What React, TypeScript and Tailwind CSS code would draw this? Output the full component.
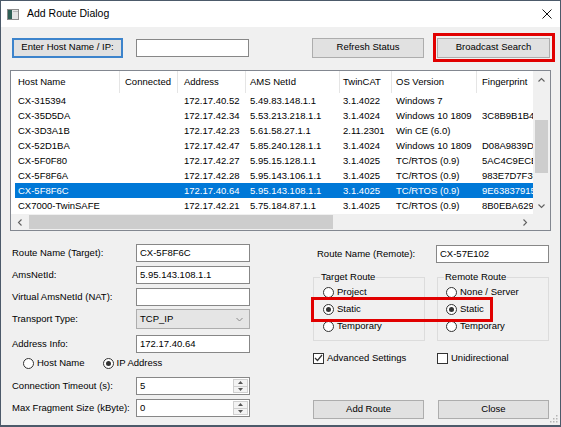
import React from 'react';

type Row = {
  host: string;
  connected: string;
  address: string;
  netId: string;
  tc: string;
  os: string;
  fp: string;
};

const rows: Row[] = [
  { host: 'CX-315394', connected: '', address: '172.17.40.52', netId: '5.49.83.148.1.1', tc: '3.1.4022', os: 'Windows 7', fp: '' },
  { host: 'CX-35D5DA', connected: '', address: '172.17.42.34', netId: '5.53.213.218.1.1', tc: '3.1.4024', os: 'Windows 10 1809', fp: '3C8B9B1B40A2' },
  { host: 'CX-3D3A1B', connected: '', address: '172.17.42.23', netId: '5.61.58.27.1.1', tc: '2.11.2301', os: 'Win CE (6.0)', fp: '' },
  { host: 'CX-52D1BA', connected: '', address: '172.17.42.47', netId: '5.85.240.128.1.1', tc: '3.1.4024', os: 'Windows 10 1809', fp: 'D08A9839D1F4' },
  { host: 'CX-5F0F80', connected: '', address: '172.17.42.27', netId: '5.95.15.128.1.1', tc: '3.1.4025', os: 'TC/RTOS (0.9)', fp: '5AC4C9ECE27B' },
  { host: 'CX-5F8F6A', connected: '', address: '172.17.42.28', netId: '5.95.143.106.1.1', tc: '3.1.4025', os: 'TC/RTOS (0.9)', fp: '983E7D7F3E61' },
  { host: 'CX-5F8F6C', connected: '', address: '172.17.40.64', netId: '5.95.143.108.1.1', tc: '3.1.4025', os: 'TC/RTOS (0.9)', fp: '9E63837915C0' },
  { host: 'CX7000-TwinSAFE', connected: '', address: '172.17.42.21', netId: '5.75.184.87.1.1', tc: '3.1.4025', os: 'TC/RTOS (0.9)', fp: '8B0EBA629D37' },
];

const SELECTED = 6;

function Button({ label, className = '' }: { label: string; className?: string }) {
  return (
    <div
      className={`flex items-center justify-center bg-[#e1e1e1] border border-[#adadad] ${className}`}
    >
      {label}
    </div>
  );
}

function TextBox({ value = '' }: { value?: string }) {
  return (
    <div className="w-[114px] h-[18px] border border-[#878787] bg-white pl-[3px] leading-[16px] whitespace-nowrap overflow-hidden">
      {value}
    </div>
  );
}

function SpinBox({ value }: { value: string }) {
  return (
    <div className="w-[114px] h-[18px] border border-[#878787] bg-white flex">
      <span className="flex-1 pl-[3px] leading-[16px]">{value}</span>
      <div className="w-[15px] m-[1px] flex flex-col border border-[#cfcfcf] bg-[#f3f3f3]">
        <div className="flex-1 flex items-center justify-center border-b border-[#cfcfcf]">
          <svg width="5" height="3" viewBox="0 0 5 3">
            <polygon points="0,3 2.5,0 5,3" fill="#555" />
          </svg>
        </div>
        <div className="flex-1 flex items-center justify-center">
          <svg width="5" height="3" viewBox="0 0 5 3">
            <polygon points="0,0 2.5,3 5,0" fill="#555" />
          </svg>
        </div>
      </div>
    </div>
  );
}

function Radio({ label, checked = false }: { label: string; checked?: boolean }) {
  return (
    <div className="flex items-center h-[17px]">
      <span className="w-[11px] h-[11px] rounded-full border border-[#333] bg-white flex items-center justify-center">
        {checked && <span className="w-[5px] h-[5px] rounded-full bg-[#333]" />}
      </span>
      <span className="ml-[3px]">{label}</span>
    </div>
  );
}

function CheckBox({ label, checked = false }: { label: string; checked?: boolean }) {
  return (
    <div className="flex items-center h-[14px]">
      <span className="w-[11px] h-[11px] border border-[#333] bg-white flex items-center justify-center">
        {checked && (
          <svg width="9" height="8" viewBox="0 0 9 8">
            <polyline points="1,4 3.5,6.5 8,1" fill="none" stroke="#333" strokeWidth="1.2" />
          </svg>
        )}
      </span>
      <span className="ml-[3px]">{label}</span>
    </div>
  );
}

function Chevron({ dir }: { dir: 'up' | 'down' | 'left' | 'right' }) {
  const pts = {
    up: '0.5,4.5 3.5,1.5 6.5,4.5',
    down: '0.5,1.5 3.5,4.5 6.5,1.5',
    left: '4.5,0.5 1.5,3.5 4.5,6.5',
    right: '1.5,0.5 4.5,3.5 1.5,6.5',
  }[dir];
  const vert = dir === 'up' || dir === 'down';
  return (
    <svg width={vert ? 7 : 6} height={vert ? 6 : 7} viewBox={vert ? '0 0 7 6' : '0 0 6 7'}>
      <polyline points={pts} fill="none" stroke="#606060" strokeWidth="1.1" />
    </svg>
  );
}

function FormRow({ label, children, className = '' }: { label: string; children: React.ReactNode; className?: string }) {
  return (
    <div className={`flex items-center ${className}`}>
      <span className="w-[124px] whitespace-nowrap">{label}</span>
      {children}
    </div>
  );
}

function GroupBox({
  title,
  className = '',
  titleClass = '',
  children,
}: {
  title: string;
  className?: string;
  titleClass?: string;
  children: React.ReactNode;
}) {
  return (
    <div className={`w-[112px] border border-[#dcdcdc] pb-[5px] flex flex-col ${className}`}>
      <span className={`-mt-[7px] self-start px-[1px] bg-[#f0f0f0] leading-[12px] ${titleClass}`}>{title}</span>
      <div className="pt-[1px]">{children}</div>
    </div>
  );
}

export default function App() {
  return (
    <div className="relative w-[561px] h-[427px] bg-[#f0f0f0] border border-b-2 border-[#4c5a6a] flex flex-col font-['Liberation_Sans',Arial,sans-serif] text-[9.5px] text-black overflow-hidden">
      {/* title bar */}
      <div className="h-[26px] bg-white flex items-center shrink-0">
        <svg className="ml-[6px]" width="12" height="11" viewBox="0 0 12 11">
          <rect x="0.5" y="0.5" width="11" height="10" fill="#e4e4e4" stroke="#8c8c8c" />
          <rect x="1" y="1" width="4" height="9" fill="#2f5f55" />
          <rect x="6" y="2" width="5" height="1" fill="#b8b8b8" />
        </svg>
        <span className="ml-[8px] text-[10.5px]">Add Route Dialog</span>
        <svg className="ml-auto mr-[8px]" width="10" height="10" viewBox="0 0 10 10">
          <line x1="0.5" y1="0.5" x2="9.5" y2="9.5" stroke="#111" strokeWidth="1" />
          <line x1="9.5" y1="0.5" x2="0.5" y2="9.5" stroke="#111" strokeWidth="1" />
        </svg>
      </div>

      {/* top buttons */}
      <div className="flex items-center h-[29px] mt-[6px]">
        <div className="ml-[11px] w-[111px] h-[20px] flex items-center justify-center bg-[#e1e1e1] border-2 border-[#3d84cc]">
          Enter Host Name / IP:
        </div>
        <div className="ml-[13px]">
          <div className="w-[113px] h-[18px] border border-[#878787] bg-white" />
        </div>
        <Button label="Refresh Status" className="ml-[63px] w-[112px] h-[20px]" />
        <div className="ml-[9px] w-[122px] h-[29px] border-[3px] border-[#e10000] flex items-center">
          <Button label="Broadcast Search" className="ml-[1px] w-[113px] h-[20px]" />
        </div>
      </div>

      {/* list view */}
      <div className="ml-[9px] mt-[8px] w-[541px] h-[161px] border border-[#828790] bg-white flex flex-col shrink-0">
        <div className="flex h-[143px]">
          <div className="w-[522px] overflow-hidden">
            <div className="flex h-[22px] items-center whitespace-nowrap">
              <div className="w-[109px] h-full pl-[7px] flex items-center border-r border-[#e5e5e5] shrink-0">Host Name</div>
              <div className="w-[58px] h-full pl-[5px] flex items-center border-r border-[#e5e5e5] shrink-0">Connected</div>
              <div className="w-[68px] h-full pl-[6px] flex items-center border-r border-[#e5e5e5] shrink-0">Address</div>
              <div className="w-[94px] h-full pl-[4px] flex items-center border-r border-[#e5e5e5] shrink-0">AMS NetId</div>
              <div className="w-[52px] h-full pl-[3px] flex items-center border-r border-[#e5e5e5] shrink-0">TwinCAT</div>
              <div className="w-[85px] h-full pl-[4px] flex items-center border-r border-[#e5e5e5] shrink-0">OS Version</div>
              <div className="w-[90px] h-full pl-[5px] flex items-center border-r border-[#e5e5e5] shrink-0">Fingerprint</div>
            </div>
            {rows.map((r, i) => {
              const sel = i === SELECTED;
              return (
                <div key={r.host} className="flex h-[15px] leading-[15px] whitespace-nowrap">
                  <div className="w-[4px] shrink-0" />
                  <div className={`flex flex-1 ${sel ? 'bg-[#0078d7] text-white' : ''}`}>
                    <div className="w-[105px] pl-[3px] overflow-hidden shrink-0">{r.host}</div>
                    <div className="w-[58px] pl-[5px] overflow-hidden shrink-0">{r.connected}</div>
                    <div className="w-[68px] pl-[6px] overflow-hidden shrink-0">{r.address}</div>
                    <div className="w-[94px] pl-[4px] overflow-hidden shrink-0">{r.netId}</div>
                    <div className="w-[52px] pl-[3px] overflow-hidden shrink-0">{r.tc}</div>
                    <div className="w-[85px] pl-[4px] overflow-hidden shrink-0">{r.os}</div>
                    <div className="flex-1 pl-[5px] overflow-hidden">{r.fp}</div>
                  </div>
                </div>
              );
            })}
          </div>
          {/* vertical scrollbar */}
          <div className="w-[17px] bg-[#f0f0f0] flex flex-col">
            <div className="h-[17px] flex items-center justify-center">
              <Chevron dir="up" />
            </div>
            <div className="flex-1">
              <div className="mt-[32px] mx-[2px] h-[53px] bg-[#cdcdcd]" />
            </div>
            <div className="h-[17px] flex items-center justify-center">
              <Chevron dir="down" />
            </div>
          </div>
        </div>
        {/* horizontal scrollbar */}
        <div className="flex h-[16px] bg-[#f0f0f0]">
          <div className="w-[522px] flex">
            <div className="w-[17px] flex items-center justify-center">
              <Chevron dir="left" />
            </div>
            <div className="flex-1 py-[1px]">
              <div className="ml-[1px] w-[304px] h-full bg-[#cdcdcd]" />
            </div>
            <div className="w-[17px] flex items-center justify-center">
              <Chevron dir="right" />
            </div>
          </div>
          <div className="w-[17px]" />
        </div>
      </div>

      {/* lower form */}
      <div className="flex">
        <div className="ml-[11px] w-[239px] pt-[13px] flex flex-col">
          <FormRow label="Route Name (Target):">
            <TextBox value="CX-5F8F6C" />
          </FormRow>
          <FormRow label="AmsNetId:" className="mt-[4px]">
            <TextBox value="5.95.143.108.1.1" />
          </FormRow>
          <FormRow label="Virtual AmsNetId (NAT):" className="mt-[4px]">
            <TextBox />
          </FormRow>
          <FormRow label="Transport Type:" className="mt-[3px]">
            <div className="w-[114px] h-[20px] border border-[#adadad] bg-[#e5e5e5] flex items-center pl-[3px]">
              <span className="flex-1">TCP_IP</span>
              <svg className="mr-[6px]" width="7" height="5" viewBox="0 0 7 5">
                <polyline points="0.5,1 3.5,4 6.5,1" fill="none" stroke="#8a8a8a" strokeWidth="1" />
              </svg>
            </div>
          </FormRow>
          <FormRow label="Address Info:" className="mt-[6px]">
            <TextBox value="172.17.40.64" />
          </FormRow>
          <div className="flex mt-[2px] h-[16px] items-center pl-[11px]">
            <Radio label="Host Name" />
            <div className="ml-[18px]">
              <Radio label="IP Address" checked />
            </div>
          </div>
          <FormRow label="Connection Timeout (s):" className="mt-[6px]">
            <SpinBox value="5" />
          </FormRow>
          <FormRow label="Max Fragment Size (kByte):" className="mt-[4px]">
            <SpinBox value="0" />
          </FormRow>
        </div>

        <div className="relative ml-[62px] w-[237px] pt-[14px] flex flex-col">
          <div className="flex items-center">
            <span className="w-[123px] pl-[4px]">Route Name (Remote):</span>
            <div className="w-[113px] h-[18px] border border-[#878787] bg-white pl-[3px] leading-[16px]">CX-57E102</div>
          </div>
          <div className="flex mt-[14px]">
            <GroupBox title="Target Route" className="pl-[9px]" titleClass="-ml-[3px]">
              <Radio label="Project" />
              <Radio label="Static" checked />
              <Radio label="Temporary" />
            </GroupBox>
            <GroupBox title="Remote Route" className="ml-[12px] pl-[8px]" titleClass="-ml-[2px]">
              <Radio label="None / Server" />
              <Radio label="Static" checked />
              <Radio label="Temporary" />
            </GroupBox>
          </div>
          <div className="flex mt-[10px]">
            <div className="w-[124px]">
              <CheckBox label="Advanced Settings" checked />
            </div>
            <CheckBox label="Unidirectional" />
          </div>
          <div className="flex mt-[35px]">
            <Button label="Add Route" className="w-[111px] h-[19px]" />
            <Button label="Close" className="ml-[14px] w-[111px] h-[19px]" />
          </div>
          {/* annotation overlay */}
          <div className="absolute left-[-2px] top-[66px] w-[182px] h-[25px] border-[3px] border-[#e10000] pointer-events-none" />
        </div>
      </div>

      {/* resize grip */}
      <svg className="absolute right-[2px] bottom-[2px]" width="8" height="8" viewBox="0 0 8 8">
        <rect x="6" y="0" width="1.5" height="1.5" fill="#b5b5b5" />
        <rect x="3" y="3" width="1.5" height="1.5" fill="#b5b5b5" />
        <rect x="6" y="3" width="1.5" height="1.5" fill="#b5b5b5" />
        <rect x="0" y="6" width="1.5" height="1.5" fill="#b5b5b5" />
        <rect x="3" y="6" width="1.5" height="1.5" fill="#b5b5b5" />
        <rect x="6" y="6" width="1.5" height="1.5" fill="#b5b5b5" />
      </svg>
    </div>
  );
}
